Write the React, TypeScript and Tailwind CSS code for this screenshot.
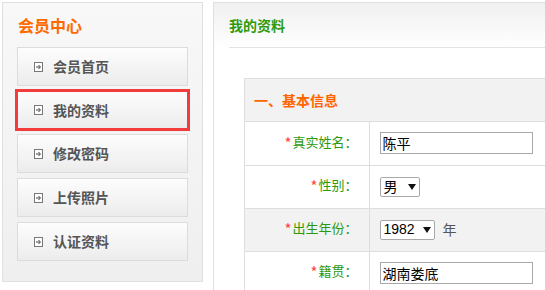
import { useState } from "react";

const menu = ["会员首页", "我的资料", "修改密码", "上传照片", "认证资料"];

const ArrowBox = () => (
  <svg width="9" height="10" viewBox="0 0 9 10" className="shrink-0">
    <rect x="0.5" y="0.5" width="8" height="9" fill="#fff" stroke="#777" />
    <path d="M2 5h4M4.5 3l2 2-2 2" fill="none" stroke="#444" strokeWidth="1" />
  </svg>
);

const Label = ({ text }: { text: string }) => (
  <span>
    <span className="text-[#f44] text-[15px] align-[-2px] mr-[1px]">*</span>
    {text}：
  </span>
);

const Caret = () => (
  <svg width="8" height="6" viewBox="0 0 8 6">
    <path d="M0 0h8L4 6z" fill="#111" />
  </svg>
);

export default function App() {
  const [name, setName] = useState("陈平");
  const [home, setHome] = useState("湖南娄底");

  return (
    <div
      className="w-[545px] h-[290px] overflow-hidden bg-white flex items-start"
      style={{ fontFamily: '"Noto Sans CJK SC", sans-serif' }}
    >
      {/* left menu */}
      <div className="ml-[2px] mt-[2px] w-[201px] h-[280px] shrink-0 border border-[#e0e0e0] bg-gradient-to-b from-[#f8f8f8] to-[#efefef]">
        <h3 className="pl-[15px] pt-[11px] h-[44px] text-[16px] font-bold text-[#ff6a00] leading-[22px]">
          会员中心
        </h3>
        <div className="flex flex-col gap-[5px] px-[14px]">
          {menu.map((item, i) => (
            <div
              key={i}
              className={`${
                i === 1 ? "border-[3px] border-[#f03c3c] -my-[2px] -mx-[2px] h-[42px]" : "border border-[#dcdcdc] h-[39px]"
              } flex items-center gap-[10px] pl-[16px] bg-gradient-to-b from-[#fdfdfd] to-[#ececec] text-[14px] font-bold text-[#555]`}
            >
              <ArrowBox />
              <span>{item}</span>
            </div>
          ))}
        </div>
      </div>

      {/* right content */}
      <div className="ml-[10px] mt-[2px] flex-1 h-[300px] border-l border-t border-[#e0e0e0]">
        <div className="bg-gradient-to-b from-[#f0f0f0] to-white">
          <div className="h-[45px] mx-[15px] border-b border-[#e3e3e3] flex items-center">
            <h2 className="text-[14px] font-bold text-[#2f9a0c]">我的资料</h2>
          </div>
        </div>
        <div className="ml-[30px] mt-[30px] w-[340px] border-l border-t border-[#dedede]">
          <div className="h-[43px] bg-[#f2f2f2] border-b border-[#dedede] flex items-center pl-[9px] text-[14px] font-bold text-[#f60]">
            一、基本信息
          </div>
          <table className="w-full border-collapse text-[13px]">
            <tbody>
              <tr className="h-[43px] border-b border-[#dedede]">
                <td className="w-[124px] border-r border-[#dedede] text-right pr-[11px] text-[#2b9a0f]">
                  <Label text="真实姓名" />
                </td>
                <td className="pl-[10px]">
                  <input
                    value={name}
                    onChange={(e) => setName(e.target.value)}
                    className="w-[153px] h-[22px] border border-[#a9a9a9] px-[2px] text-[14px] text-black outline-none"
                  />
                </td>
              </tr>
              <tr className="h-[43px] border-b border-[#dedede]">
                <td className="border-r border-[#dedede] text-right pr-[11px] text-[#2b9a0f]">
                  <Label text="性别" />
                </td>
                <td className="pl-[10px]">
                  <div className="w-[40px] h-[20px] border border-[#a9a9a9] rounded-[2px] flex items-center justify-between px-[3px] text-[14px] text-black">
                    <span>男</span>
                    <Caret />
                  </div>
                </td>
              </tr>
              <tr className="h-[43px] border-b border-[#dedede] bg-[#f2f2f2]">
                <td className="border-r border-[#dedede] text-right pr-[11px] text-[#2b9a0f]">
                  <Label text="出生年份" />
                </td>
                <td className="pl-[10px]">
                  <div className="flex items-center gap-[8px]">
                    <div className="w-[55px] h-[20px] border border-[#a9a9a9] rounded-[2px] bg-white flex items-center justify-between px-[3px] text-[14px] text-black">
                      <span style={{ fontFamily: '"Liberation Sans", sans-serif' }}>1982</span>
                      <Caret />
                    </div>
                    <span className="text-[14px] text-[#555]">年</span>
                  </div>
                </td>
              </tr>
              <tr className="h-[43px] border-b border-[#dedede]">
                <td className="border-r border-[#dedede] text-right pr-[11px] text-[#2b9a0f]">
                  <Label text="籍贯" />
                </td>
                <td className="pl-[10px]">
                  <input
                    value={home}
                    onChange={(e) => setHome(e.target.value)}
                    className="w-[153px] h-[22px] border border-[#a9a9a9] px-[2px] text-[14px] text-black outline-none"
                  />
                </td>
              </tr>
            </tbody>
          </table>
        </div>
      </div>
    </div>
  );
}
